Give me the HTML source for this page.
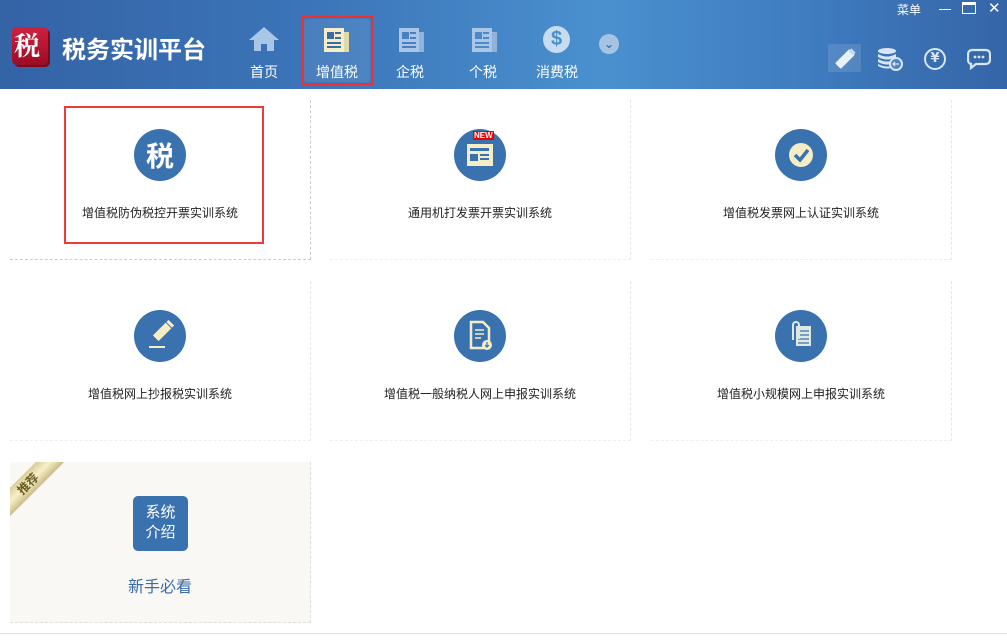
<!DOCTYPE html>
<html><head><meta charset="utf-8"><style>
*{margin:0;padding:0;box-sizing:border-box}
body{width:1007px;height:642px;overflow:hidden;background:#fff;font-family:"Liberation Sans","Noto Sans CJK SC",sans-serif;position:relative}
.hdr{position:absolute;left:0;top:0;width:1007px;height:89px;background:linear-gradient(90deg,#3463a6 0%,#3b74b8 30%,#4a90cf 60%,#3f7cc0 80%,#3565a8 100%)}
.a{position:absolute}
.navt{position:absolute;color:#fff;font-size:14px;top:62px;width:60px;text-align:center}
.card{position:absolute;width:301px;height:160px}
.c{position:absolute;width:52px;height:52px;border-radius:50%;background:#3a72b0;left:50%;margin-left:-26px;top:29px}
.t{position:absolute;width:100%;text-align:center;font-size:12px;color:#222;top:104px}
</style></head><body>
<div class="hdr"></div>
<div class="a" style="left:12px;top:27px;width:36px;height:38px;border-radius:5px;background:linear-gradient(#d02040,#9c0c24);box-shadow:2px 2px 0 #7a0a1c"></div>
<div class="a" style="left:14px;top:29px;color:#fff;font:bold 26px 'Noto Serif CJK SC',serif;line-height:32px">税</div>
<div class="a" style="left:62px;top:30px;color:#fff;font-weight:bold;font-size:24px">税务实训平台</div>
<div class="a" style="left:301px;top:16px;width:72px;height:69px;border:2px solid #f03030"></div>
<div class="a" style="left:304px;top:19px;width:66px;height:63px;background:rgba(255,255,255,0.08);border-radius:3px"></div>
<svg class="a" style="left:248px;top:26px" width="32" height="26" viewBox="0 0 32 26"><path d="M16 1L1 14h5v11h7v-7h6v7h7V14h5z" fill="#a9c6e6"/></svg>
<svg class="a" style="left:322px;top:27px" width="30" height="26" viewBox="0 0 30 26"><rect x="2" y="1" width="20" height="24" fill="#f4edc6"/><rect x="22" y="5" width="5" height="20" fill="#e2d9a8"/><rect x="5" y="5" width="7" height="7" fill="#3a6aa8"/><rect x="13" y="5" width="6" height="2" fill="#3a6aa8"/><rect x="13" y="10" width="6" height="2" fill="#3a6aa8"/><rect x="5" y="15" width="14" height="2" fill="#3a6aa8"/><rect x="5" y="19" width="14" height="2" fill="#3a6aa8"/></svg>
<svg class="a" style="left:397px;top:27px" width="30" height="26" viewBox="0 0 30 26"><rect x="2" y="1" width="20" height="24" fill="#a9c6e6"/><rect x="22" y="5" width="5" height="20" fill="#8fb3dc"/><rect x="5" y="5" width="7" height="7" fill="#4a80c0"/><rect x="13" y="5" width="6" height="2" fill="#4a80c0"/><rect x="13" y="10" width="6" height="2" fill="#4a80c0"/><rect x="5" y="15" width="14" height="2" fill="#4a80c0"/><rect x="5" y="19" width="14" height="2" fill="#4a80c0"/></svg>
<svg class="a" style="left:470px;top:27px" width="30" height="26" viewBox="0 0 30 26"><rect x="2" y="1" width="20" height="24" fill="#a9c6e6"/><rect x="22" y="5" width="5" height="20" fill="#8fb3dc"/><rect x="5" y="5" width="7" height="7" fill="#4a8ac8"/><rect x="13" y="5" width="6" height="2" fill="#4a8ac8"/><rect x="13" y="10" width="6" height="2" fill="#4a8ac8"/><rect x="5" y="15" width="14" height="2" fill="#4a8ac8"/><rect x="5" y="19" width="14" height="2" fill="#4a8ac8"/></svg>
<div class="a" style="left:543px;top:26px;width:27px;height:27px;border-radius:50%;background:#c8dcf0;color:#4a8ece;font:bold 20px/27px 'Liberation Sans';text-align:center">$</div>
<div class="a" style="left:599px;top:34px;width:20px;height:20px;border-radius:50%;background:#a7c3e2;color:#3a70b0;font:bold 12px/20px 'DejaVu Sans';text-align:center">⌄</div>
<div class="navt" style="left:234px">首页</div>
<div class="navt" style="left:307px">增值税</div>
<div class="navt" style="left:380px">企税</div>
<div class="navt" style="left:453px">个税</div>
<div class="navt" style="left:527px">消费税</div>
<div class="a" style="left:897px;top:1px;color:#fff;font-size:12px">菜单</div>
<div class="a" style="left:939px;top:9px;width:12px;height:1px;background:#fff"></div>
<div class="a" style="left:962px;top:2px;width:14px;height:12px;border:1px solid #fff;border-top-width:3px"></div>
<div class="a" style="left:988px;top:-1px;color:#fff;font-size:15px">✕</div>
<div class="a" style="left:828px;top:44px;width:33px;height:28px;background:rgba(255,255,255,0.12);border-radius:2px"></div>
<svg class="a" style="left:833px;top:47px" width="24" height="24" viewBox="0 0 24 24"><g transform="rotate(45 12 12)"><rect x="8" y="2" width="8" height="20" rx="1" fill="#e8f0fa"/><rect x="9" y="0" width="6" height="4" fill="#c8dcf0"/></g></svg>
<svg class="a" style="left:877px;top:46px" width="26" height="26" viewBox="0 0 26 26"><g fill="#d8e6f5"><ellipse cx="10" cy="5" rx="9" ry="3"/><path d="M1 8q9 5 18 0v3q-9 5-18 0zM1 13q9 5 18 0v3q-9 5-18 0zM1 18q9 5 18 0v2q-9 5-18 0z"/></g><circle cx="19" cy="18" r="6" fill="#4a86c6" stroke="#d8e6f5" stroke-width="2"/><path d="M16 18h6M18 16l-2 2 2 2" stroke="#d8e6f5" stroke-width="1.3" fill="none"/></svg>
<div class="a" style="left:924px;top:48px;width:22px;height:22px;border-radius:50%;border:2.5px solid #d8e6f5;color:#d8e6f5;font:bold 13px/17px 'DejaVu Sans';text-align:center">¥</div>
<svg class="a" style="left:967px;top:48px" width="24" height="22" viewBox="0 0 24 22"><path d="M5 2h14a4 4 0 0 1 4 4v6a4 4 0 0 1-4 4H9l-5 4v-4a4 4 0 0 1-3-4V6a4 4 0 0 1 4-4z" fill="none" stroke="#d8e6f5" stroke-width="2.2"/><circle cx="8" cy="9" r="1.4" fill="#d8e6f5"/><circle cx="12" cy="9" r="1.4" fill="#d8e6f5"/><circle cx="16" cy="9" r="1.4" fill="#d8e6f5"/></svg>
<div class="card" style="left:10px;top:100px;border-right:1px dashed #ccc;border-bottom:1px dashed #ccc"><div class="c" style="color:#fff;font:bold 28px/52px 'Noto Sans CJK SC';text-align:center">税</div><div class="t">增值税防伪税控开票实训系统</div></div>
<div class="a" style="left:64px;top:106px;width:200px;height:138px;border:2px solid #f03a3a"></div>
<div class="card" style="left:330px;top:100px;border-right:1px dashed #e6e6e6;border-bottom:1px dashed #eee"><div class="c"><svg width="52" height="52"><rect x="13" y="15" width="26" height="22" fill="#f4edc6"/><rect x="16" y="19" width="19" height="3" fill="#3a72b0"/><rect x="16" y="25" width="8" height="7" fill="#3a72b0"/><rect x="26" y="25" width="9" height="2" fill="#3a72b0"/><rect x="26" y="29" width="9" height="2" fill="#3a72b0"/></svg></div><div class="a" style="left:143px;top:31px;background:#e00;color:#fff;font:bold 8px/9px 'Liberation Sans';padding:0 1px">NEW</div><div class="t">通用机打发票开票实训系统</div></div>
<div class="card" style="left:651px;top:100px;border-right:1px dashed #e6e6e6;border-bottom:1px dashed #eee"><div class="c"><svg width="52" height="52"><circle cx="26" cy="26" r="12" fill="#f4edc6"/><path d="M20 26l5 5 8-10" stroke="#3a72b0" stroke-width="3.5" fill="none"/></svg></div><div class="t">增值税发票网上认证实训系统</div></div>
<div class="card" style="left:10px;top:281px;border-right:1px dashed #e6e6e6;border-bottom:1px dashed #eee"><div class="c"><svg width="52" height="52"><g transform="rotate(45 26 24)"><rect x="22" y="12" width="8" height="18" fill="#f4edc6"/><rect x="22" y="8" width="8" height="3" fill="#f4edc6"/></g><path d="M15 37h16" stroke="#f4edc6" stroke-width="2"/></svg></div><div class="t">增值税网上抄报税实训系统</div></div>
<div class="card" style="left:330px;top:281px;border-right:1px dashed #e6e6e6;border-bottom:1px dashed #eee"><div class="c"><svg width="52" height="52"><path d="M17 12h12l6 6v20H17z" fill="none" stroke="#f4edc6" stroke-width="2.5"/><path d="M21 20h9M21 24h9M21 28h6" stroke="#f4edc6" stroke-width="1.5"/><circle cx="33" cy="35" r="5" fill="#f4edc6"/><path d="M33 32v5M31 35l2 2 2-2" stroke="#3a72b0" stroke-width="1.2" fill="none"/></svg></div><div class="t">增值税一般纳税人网上申报实训系统</div></div>
<div class="card" style="left:651px;top:281px;border-right:1px dashed #e6e6e6;border-bottom:1px dashed #eee"><div class="c"><svg width="52" height="52"><rect x="21" y="16" width="15" height="20" fill="#dfe8e0"/><path d="M23 21h11M23 25h11M23 29h11M23 33h11" stroke="#3a72b0" stroke-width="1.3"/><path d="M18 30V15a3 3 0 0 1 6 0v14" stroke="#dfe8e0" stroke-width="2" fill="none"/></svg></div><div class="t">增值税小规模网上申报实训系统</div></div>
<div class="card" style="left:10px;top:462px;height:161px;background:#f9f8f4;border-right:1px dashed #ddd;border-bottom:1px dashed #ddd;overflow:hidden">
<div class="a" style="left:-32px;top:12px;width:100px;height:20px;transform:rotate(-45deg);background:linear-gradient(#d8cc98,#f8f0c8,#c8bc88);color:#6a5a20;font:bold 12px/20px 'Noto Sans CJK SC';text-align:center">推荐</div>
<div class="a" style="left:123px;top:34px;width:55px;height:55px;border-radius:5px;background:#3a72b0;color:#fff;font-size:15px;line-height:20px;text-align:center;padding-top:7px">系统<br>介绍</div>
<div class="a" style="width:100%;top:111px;text-align:center;color:#3a6aa8;font-size:16px">新手必看</div>
</div>
<div class="a" style="left:0;top:633px;width:1007px;height:1px;background:#e0e0e8"></div>
</body></html>
